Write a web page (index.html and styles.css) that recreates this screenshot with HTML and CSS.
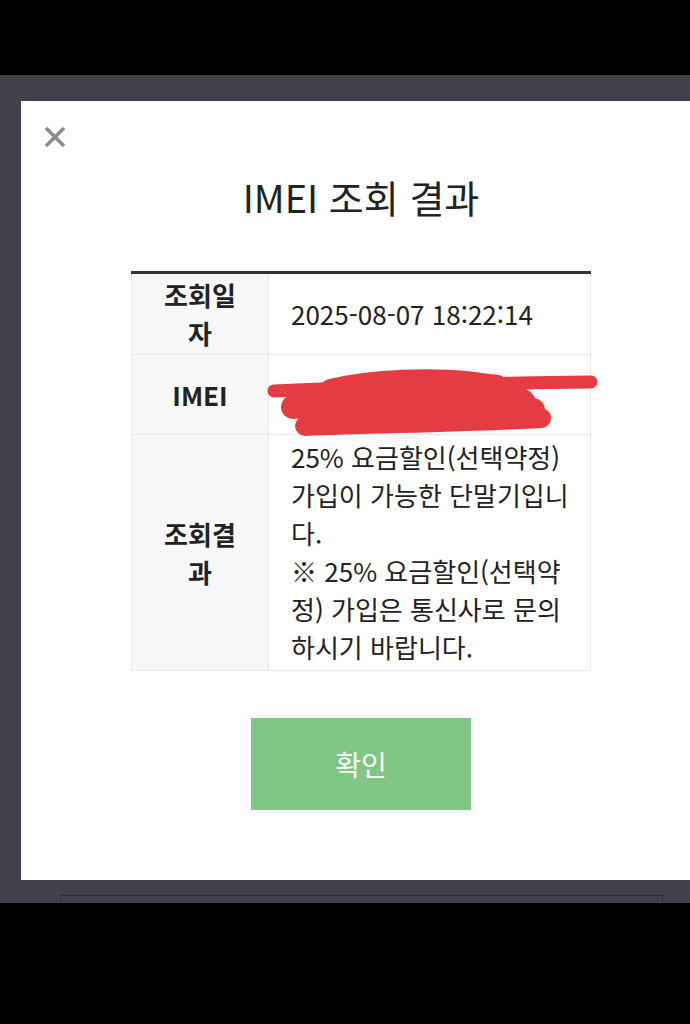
FILE: index.html
```html
<!DOCTYPE html>
<html lang="ko">
<head>
    <meta charset="UTF-8">
    <meta name="viewport" content="width=device-width, initial-scale=1.0">
    <title>IMEI 조회 결과</title>
    <link rel="stylesheet" href="styles.css">
</head>
<body>
    <div class="topbar"></div>

    <div class="screen">
        <div class="modal">
            <button class="close" aria-label="닫기">
                <svg width="24" height="24" viewBox="0 0 24 24">
                    <path d="M3 3 L21 21 M21 3 L3 21" stroke="#8c8c8c" stroke-width="3.6" fill="none"/>
                </svg>
            </button>

            <h2 class="title">IMEI 조회 결과</h2>

            <table class="result">
                <tr class="row-date">
                    <th>조회일자</th>
                    <td>2025-08-07 18:22:14</td>
                </tr>
                <tr class="row-imei">
                    <th>IMEI</th>
                    <td class="masked">
                        <!-- 손으로 칠한 가림 표시 -->
                        <svg class="scribble" width="335" height="75" viewBox="0 0 335 75">
                            <g stroke="#e53c44" stroke-linecap="round" stroke-linejoin="round" fill="none">
                                <path d="M9 31 Q160 24 326 22" stroke-width="13"/>
                                <path d="M66 30 C110 19 170 19 200 22 L232 26" stroke-width="22"/>
                                <path d="M28 47 C110 38 200 40 268 50" stroke-width="24"/>
                                <path d="M40 66 C120 63 200 62 276 58" stroke-width="20"/>
                                <path d="M60 44 L255 44" stroke-width="32"/>
                            </g>
                        </svg>
                    </td>
                </tr>
                <tr class="row-result">
                    <th>조회결과</th>
                    <td>25% 요금할인(선택약정) 가입이 가능한 단말기입니다.<br>※ 25% 요금할인(선택약정) 가입은 통신사로 문의하시기 바랍니다.</td>
                </tr>
            </table>

            <button class="confirm">확인</button>
        </div>

        <div class="under"></div>
    </div>
</body>
</html>
```

FILE: styles.css
```css
html, body {
    margin: 0;
    padding: 0;
}
body {
    background: #000;
    width: 690px;
    height: 1024px;
    overflow: hidden;
    font-family: "Noto Sans CJK KR", "Noto Sans", sans-serif;
    color: #222;
}
.topbar {
    height: 75px;
    background: #000;
}
.screen {
    height: 828px;
    background: #41414a;
    padding: 26px 0 0 21px;
    box-sizing: border-box;
    overflow: hidden;
}
.modal {
    position: relative;
    width: 680px;
    height: 779px;
    background: #fff;
    padding-top: 74px;
    box-sizing: border-box;
}
.close {
    position: absolute;
    left: 22px;
    top: 24px;
    width: 24px;
    height: 24px;
    padding: 0;
    border: 0;
    background: none;
    cursor: pointer;
}
.close svg {
    display: block;
}
.title {
    margin: 0 0 52px;
    font-size: 38px;
    line-height: 44px;
    font-weight: 400;
    text-align: center;
    color: #222;
}
.result {
    width: 460px;
    margin: 0 auto;
    border-collapse: collapse;
    border-top: 3px solid #333;
    font-size: 26px;
    line-height: 38px;
}
.result th,
.result td {
    border: 1px solid #e8e8e8;
    padding: 2px 9px 2px 22px;
    vertical-align: middle;
}
.result th {
    width: 80px;
    padding: 2px 28px;
    background: #f7f7f7;
    font-weight: 700;
    font-size: 26px;
    text-align: center;
    color: #222;
}
.result td {
    text-align: left;
    color: #222;
}
.row-imei {
    height: 80px;
}
.row-result td {
    padding-top: 3px;
    padding-bottom: 4px;
}
.masked {
    position: relative;
}
.scribble {
    position: absolute;
    left: -4px;
    top: 5px;
    overflow: visible;
}
.confirm {
    display: block;
    width: 220px;
    height: 92px;
    margin: 47px auto 0;
    padding: 0;
    border: 0;
    background: #80c684;
    color: #fff;
    font-family: "Noto Sans CJK KR", "Noto Sans", sans-serif;
    font-size: 28px;
    cursor: pointer;
}
.under {
    width: 603px;
    height: 20px;
    margin: 15px 0 0 39px;
    border: 1px solid #2e2e35;
    box-sizing: border-box;
}
```
